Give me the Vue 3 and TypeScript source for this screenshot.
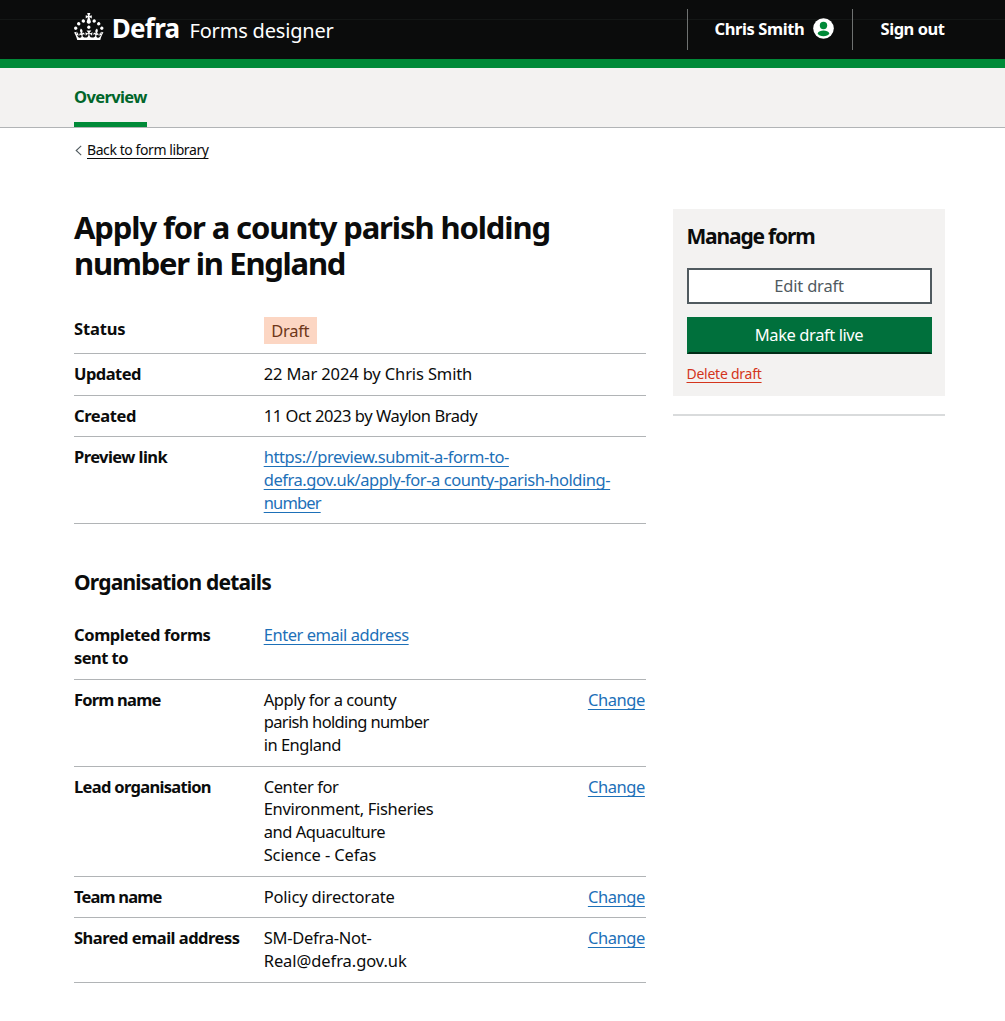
<script setup lang="ts">
interface Line {
  text: string
  /** letter-spacing in pixels */
  track: number
}
interface Row {
  key: Line[]
  value: Line[]
  kind?: 'tag' | 'link'
  action?: boolean
}

const titleLines: Line[] = [
  { text: 'Apply for a county parish holding', track: -1.12 },
  { text: 'number in England', track: -1.27 },
]

const formRows: Row[] = [
  { key: [{ text: 'Status', track: -0.13 }], value: [{ text: 'Draft', track: -0.28 }], kind: 'tag' },
  { key: [{ text: 'Updated', track: -0.53 }], value: [{ text: '22 Mar 2024 by Chris Smith', track: -0.13 }] },
  { key: [{ text: 'Created', track: -0.4 }], value: [{ text: '11 Oct 2023 by Waylon Brady', track: -0.43 }] },
  {
    key: [{ text: 'Preview link', track: -0.57 }],
    value: [
      { text: 'https://preview.submit-a-form-to-', track: -0.42 },
      { text: 'defra.gov.uk/apply-for-a county-parish-holding-', track: -0.45 },
      { text: 'number', track: -0.85 },
    ],
    kind: 'link',
  },
]

const organisationRows: Row[] = [
  {
    key: [
      { text: 'Completed forms', track: -0.39 },
      { text: 'sent to', track: -0.54 },
    ],
    value: [{ text: 'Enter email address', track: -0.46 }],
    kind: 'link',
  },
  {
    key: [{ text: 'Form name', track: -0.8 }],
    value: [
      { text: 'Apply for a county', track: -0.46 },
      { text: 'parish holding number', track: -0.64 },
      { text: 'in England', track: -0.5 },
    ],
    action: true,
  },
  {
    key: [{ text: 'Lead organisation', track: -0.68 }],
    value: [
      { text: 'Center for', track: -0.4 },
      { text: 'Environment, Fisheries', track: -0.32 },
      { text: 'and Aquaculture', track: -0.46 },
      { text: 'Science - Cefas', track: -0.13 },
    ],
    action: true,
  },
  { key: [{ text: 'Team name', track: -0.83 }], value: [{ text: 'Policy directorate', track: -0.18 }], action: true },
  {
    key: [{ text: 'Shared email address', track: -0.5 }],
    value: [
      { text: 'SM-Defra-Not-', track: -0.26 },
      { text: 'Real@defra.gov.uk', track: -0.07 },
    ],
    action: true,
  },
]

const sections = [
  { title: '', rows: formRows },
  { title: 'Organisation details', rows: organisationRows },
]
</script>

<template>
  <div class="page">
    <header class="header">
      <div class="brand">
        <svg class="crown" viewBox="0 0 32 30" aria-hidden="true">
          <path
            fill="#fff"
            d="M22.6 10.4c-1 .4-2-.1-2.4-1-.4-.9.1-2 1-2.4.9-.4 2 .1 2.4 1s-.1 2-1 2.4m-5.9 6.7c-.9.4-2-.1-2.4-1-.4-.9.1-2 1-2.4.9-.4 2 .1 2.4 1s-.1 2-1 2.4m10.8-3.7c-1 .4-2-.1-2.4-1-.4-.9.1-2 1-2.4.9-.4 2 .1 2.4 1s0 2-1 2.4m3.3 4.8c-1 .4-2-.1-2.4-1-.4-.9.1-2 1-2.4.9-.4 2 .1 2.4 1s-.1 2-1 2.4M17 4.7l2.3 1.2V2.5l-2.3.7-.2-.2.9-3h-3.4l.9 3-.2.2c-.1.1-2.3-.7-2.3-.7v3.4L15 4.7c.1.1.1.2.2.2l-1.3 4c-.1.2-.1.4-.1.6 0 1.1.8 2 1.9 2.2h.7c1-.2 1.9-1.1 1.9-2.1 0-.2 0-.4-.1-.6l-1.3-4c-.1-.2 0-.2.1-.3m-7.6 5.7c.9.4 2-.1 2.4-1 .4-.9-.1-2-1-2.4-.9-.4-2 .1-2.4 1s0 2 1 2.4m-5 3c.9.4 2-.1 2.4-1 .4-.9-.1-2-1-2.4-.9-.4-2 .1-2.4 1s.1 2 1 2.4m-3.2 4.8c.9.4 2-.1 2.4-1 .4-.9-.1-2-1-2.4-.9-.4-2 .1-2.4 1s0 2 1 2.4m14.8 11c4.4 0 8.6.3 12.3.8 1.1-4.5 2.4-7 3.7-8.8l-2.5-.9c.2 1.3.3 1.9 0 2.7-.4-.4-.8-1.1-1.1-2.3l-1.2 4c.7-.5 1.3-.8 2-.9-1.1 2.5-2.6 3.1-3.5 3-1.1-.2-1.7-1.2-1.5-2.1.3-1.2 1.5-1.5 2.1-.1 1.1-2.3-.8-3-2-2.3 1.9-1.9 2.1-3.5.6-5.6-2.1 1.6-2.1 3.2-1.2 5.5-1.2-1.4-3.2-.6-2.5 1.6.9-1.4 2.1-.5 1.9.8-.2 1.1-1.7 2.1-3.5 1.9-2.7-.2-2.9-2.1-2.9-3.6.7-.1 1.9.5 2.9 1.9l.4-4.3c-1.1 1.1-2.1 1.4-3.2 1.4.4-1.2 2.1-3 2.1-3h-5.4s1.7 1.9 2.1 3c-1.1 0-2.1-.2-3.2-1.4l.4 4.3c1-1.4 2.2-2 2.9-1.9-.1 1.5-.2 3.4-2.9 3.6-1.9.2-3.4-.8-3.5-1.9-.2-1.3 1-2.2 1.9-.8.7-2.3-1.2-3-2.5-1.6.9-2.2.9-3.9-1.2-5.5-1.5 2-1.3 3.7.6 5.6-1.2-.7-3.1 0-2 2.3.6-1.4 1.8-1.1 2.1.1.2.9-.3 1.9-1.5 2.1-.9.2-2.4-.5-3.5-3 .6 0 1.2.3 2 .9l-1.2-4c-.3 1.1-.7 1.9-1.1 2.3-.3-.8-.2-1.4 0-2.7l-2.9.9C1.3 23 2.6 25.5 3.7 30c3.7-.5 7.9-.8 12.3-.8"
          />
        </svg>
        <span class="org">Defra</span>
        <span class="product">Forms designer</span>
      </div>
      <div class="account">
        <a class="user">
          <span class="user-name">Chris Smith</span>
          <svg class="avatar" viewBox="0 0 21 21" aria-hidden="true">
            <circle cx="10.5" cy="10.5" r="10.3" fill="#fff" />
            <circle cx="10.5" cy="7.5" r="3.7" fill="#008a38" />
            <path d="M4.6 15.4C5.4 13.4 8 12.5 10.5 12.5s5.1.9 5.9 2.9c-1 1.7-3.2 2.8-5.9 2.8s-4.9-1.1-5.9-2.8z" fill="#008a38" />
          </svg>
        </a>
        <a class="sign-out">Sign out</a>
      </div>
    </header>

    <nav class="nav">
      <a class="nav-item">Overview</a>
    </nav>

    <div class="back">
      <svg class="chevron" viewBox="0 0 7 11" aria-hidden="true">
        <path d="M6.2.8 1.2 5.5l5 4.7" fill="none" stroke="#505a5f" stroke-width="1.1" />
      </svg>
      <a class="back-link">Back to form library</a>
    </div>

    <div class="columns">
      <main class="main">
        <h1 class="title">
          <span v-for="l in titleLines" :key="l.text" class="line" :style="{ letterSpacing: l.track + 'px' }">{{ l.text }}</span>
        </h1>
        <section v-for="(section, s) in sections" :key="s">
          <h2 v-if="section.title" class="subtitle">{{ section.title }}</h2>
          <dl class="summary">
            <div v-for="row in section.rows" :key="row.key[0].text" class="row">
              <dt class="key">
                <span v-for="l in row.key" :key="l.text" class="line" :style="{ letterSpacing: l.track + 'px' }">{{ l.text }}</span>
              </dt>
              <dd class="value" :class="row.kind">
                <span v-for="l in row.value" :key="l.text" class="line" :style="{ letterSpacing: l.track + 'px' }">{{ l.text }}</span>
              </dd>
              <dd v-if="row.action" class="action"><a>Change</a></dd>
            </div>
          </dl>
        </section>
      </main>

      <aside class="side">
        <div class="panel">
          <h2 class="panel-title">Manage form</h2>
          <button class="button secondary" type="button">Edit draft</button>
          <button class="button primary" type="button">Make draft live</button>
          <a class="delete">Delete draft</a>
        </div>
        <hr class="rule" />
      </aside>
    </div>
  </div>
</template>

<style>
body {
  margin: 0;
  background: #fff;
}
</style>

<style scoped>
.page {
  box-sizing: border-box;
  width: 1005px;
  height: 1021px;
  overflow: hidden;
  background: #fff;
  color: #0b0c0c;
  font-family: 'Noto Sans', 'Open Sans', sans-serif;
  font-size: 16.5px;
  line-height: 22.7px;
  white-space: nowrap;
}

.header {
  box-sizing: border-box;
  display: flex;
  justify-content: space-between;
  height: 68px;
  padding: 0 60px 0 74px;
  border-bottom: 9px solid #008a38;
  background: linear-gradient(#141716, #141716) 0 19px / 100% 1px no-repeat #0b0c0c;
  color: #fff;
}

.brand {
  display: flex;
  align-items: baseline;
  padding-top: 12.6px;
}

.crown {
  align-self: flex-start;
  width: 29.5px;
  height: 27.7px;
}

.org {
  margin-left: 8.2px;
  font-size: 26px;
  font-weight: 700;
  line-height: 31px;
  letter-spacing: -0.7px;
}

.product {
  margin-left: 10px;
  font-size: 20px;
  letter-spacing: -0.18px;
}

.account {
  display: flex;
  margin-top: 9px;
  height: 41px;
  font-weight: 700;
}

.user,
.sign-out {
  display: flex;
  box-sizing: border-box;
  padding: 9.3px 0 0 26.5px;
  border-left: 1px solid #6f7271;
}

.user {
  width: 165px;
  letter-spacing: -0.4px;
}

.sign-out {
  width: 93px;
  padding-left: 27.5px;
  letter-spacing: -0.45px;
}

.avatar {
  width: 21px;
  height: 21px;
  margin: -0.8px 0 0 8.8px;
}

.nav {
  box-sizing: border-box;
  height: 60px;
  padding-left: 74px;
  border-bottom: 1px solid #b1b4b6;
  background: #f3f2f1;
}

.nav-item {
  box-sizing: border-box;
  display: block;
  width: 73px;
  height: 59px;
  padding-top: 18.4px;
  border-bottom: 5px solid #008a38;
  color: #00662a;
  font-weight: 700;
  letter-spacing: -0.62px;
}

.back {
  display: flex;
  height: 22.7px;
  padding: 11.3px 0 0 75px;
  font-size: 14px;
}

.chevron {
  width: 7px;
  height: 11px;
  margin: 6.2px 5px 0 0;
}

.back-link {
  letter-spacing: -0.42px;
}

.back-link,
.delete,
.link .line,
.action a {
  text-decoration: underline;
  text-decoration-thickness: 1px;
  text-underline-offset: 2.5px;
  text-decoration-skip-ink: none;
}

.columns {
  display: flex;
  justify-content: space-between;
  padding: 46.8px 60px 0 74px;
}

.main {
  width: 571.7px;
}

.title {
  margin: 0 0 28.1px;
  font-size: 31px;
  line-height: 36.3px;
}

.subtitle {
  margin: 44.9px 0 18.7px;
  font-size: 21px;
  line-height: 27.2px;
  letter-spacing: -0.8px;
}

.summary {
  margin: 0;
}

.row {
  display: flex;
  padding: 9px 0;
  border-bottom: 1px solid #b1b4b6;
}

.key {
  width: 189.7px;
  font-weight: 700;
}

.value {
  flex: 1;
  margin: 0;
}

.line {
  display: block;
  width: fit-content;
}

.link .line,
.action a {
  color: #1d70b8;
}

.tag .line {
  margin-top: -1.5px;
  padding: 0 7.5px;
  background: #fcd6c3;
  color: #6e3619;
  line-height: 27px;
}

.action {
  margin: 0;
  padding-right: 0.8px;
  letter-spacing: -0.42px;
}

.side {
  width: 272px;
  padding-top: 0.5px;
}

.panel {
  box-sizing: border-box;
  display: flex;
  flex-direction: column;
  align-items: flex-start;
  height: 187px;
  padding: 13.5px;
  background: #f3f2f1;
}

.panel > * {
  flex: none;
}

.panel-title {
  margin: 0 0 18px;
  font-size: 21px;
  line-height: 27.2px;
  letter-spacing: -1.18px;
}

.button {
  box-sizing: border-box;
  width: 245px;
  height: 36px;
  margin: 0 0 13px;
  padding: 0;
  border: 2px solid #505a5f;
  border-radius: 0;
  font: inherit;
  line-height: 32px;
}

.secondary {
  background: #fff;
  color: #505a5f;
  letter-spacing: -0.18px;
}

.primary {
  height: 37px;
  margin-bottom: 9px;
  border-color: #00703c #00703c #002d18;
  background: #00703c;
  color: #fff;
  letter-spacing: -0.41px;
}

.delete {
  color: #d4351c;
  font-size: 14px;
  letter-spacing: -0.25px;
}

.rule {
  height: 2px;
  margin: 18px 0 0;
  border: 0;
  background: #d9dbdc;
}
</style>
